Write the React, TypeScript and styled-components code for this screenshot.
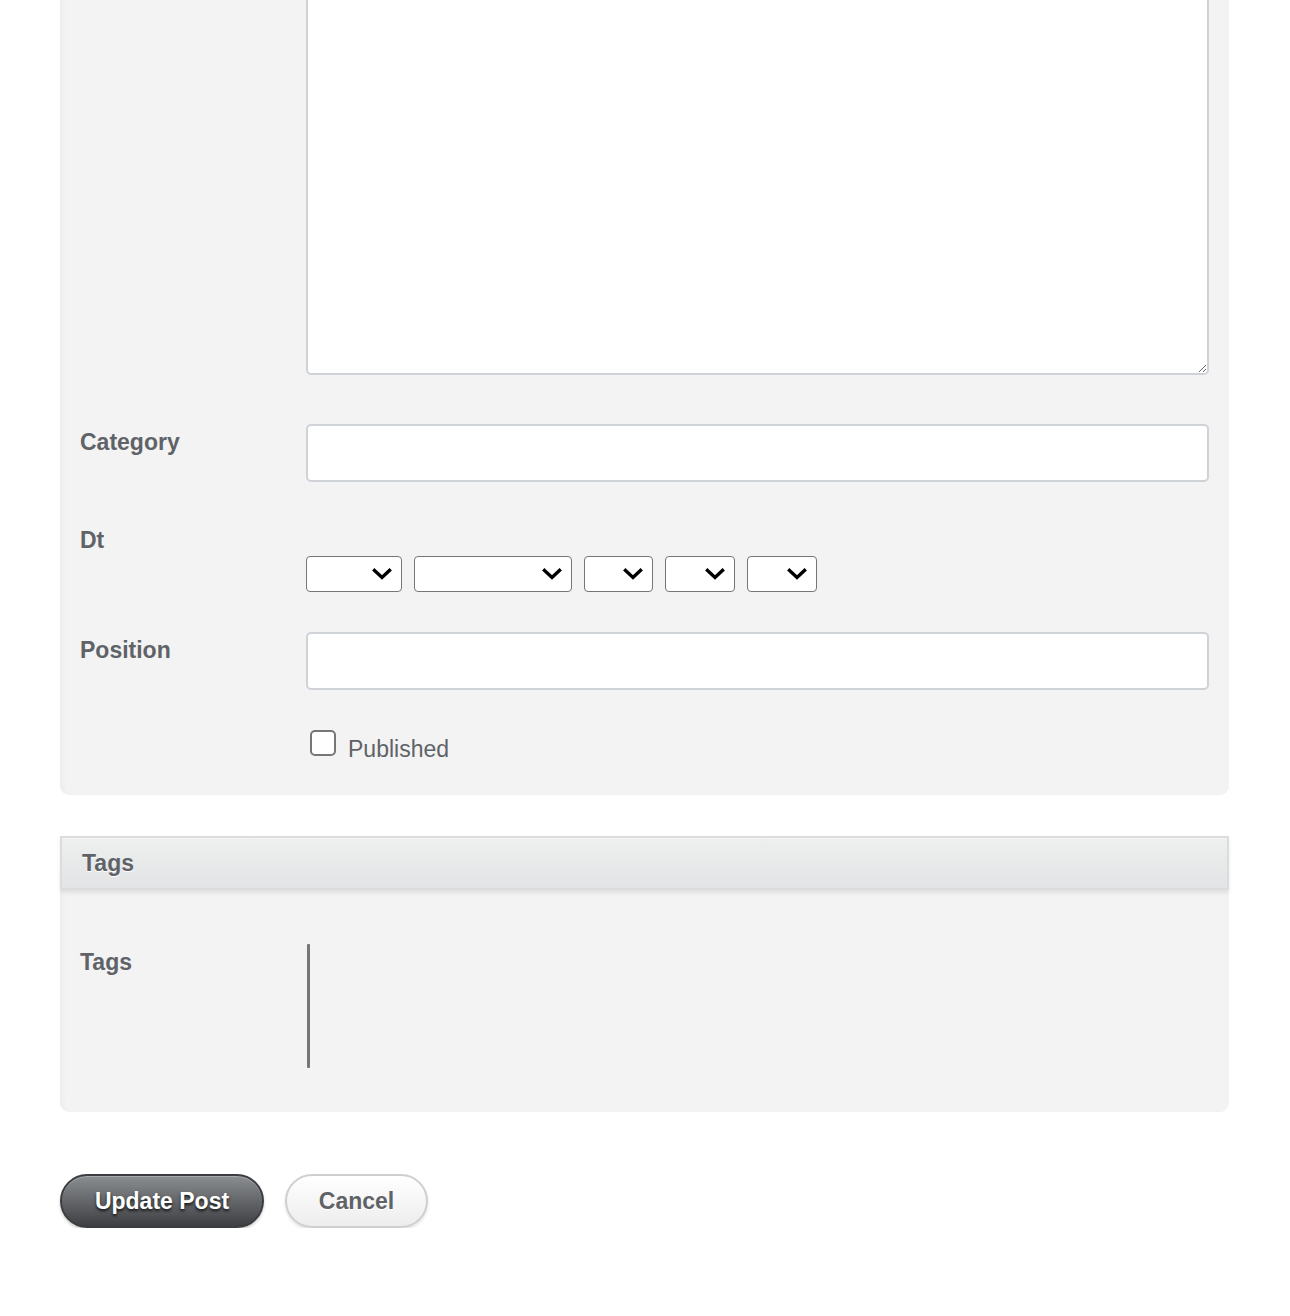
import React from "react";
import styled, { createGlobalStyle } from "styled-components";

const Global = createGlobalStyle`
  html, body { margin: 0; padding: 0; background: #ffffff; }
  body { font-family: "Liberation Sans", Arial, Helvetica, sans-serif; overflow: hidden; }
  * { box-sizing: border-box; }
`;

const Page = styled.div`
  width: 1290px;
  padding: 0 61px 0 60px;
  display: flex;
  flex-direction: column;
`;

const Panel = styled.section<{ $top?: boolean }>`
  background: #f3f3f3;
  border-radius: 0 0 9px 9px;
  box-shadow: inset 8px 0 8px -8px rgba(0, 0, 0, 0.05), 0 1px 1px rgba(0, 0, 0, 0.06);
  padding: ${(p) => (p.$top ? "0 20px 31px 20px" : "54px 20px 43px 20px")};
`;

const PanelHeader = styled.header`
  margin-top: 42px;
  height: 54px;
  display: flex;
  align-items: center;
  padding-left: 20px;
  background: linear-gradient(#eeefef, #e2e4e5);
  border: 2px solid #dcdcdc;
  box-shadow: inset 0 1px 0 #f6f6f6, 0 3px 4px rgba(0, 0, 0, 0.08);
  position: relative;
  z-index: 1;
  font-size: 23px;
  font-weight: 700;
  color: #5f6368;
  text-shadow: 0 1px 0 #ffffff;
`;

const Row = styled.div<{ $gap?: number }>`
  display: grid;
  grid-template-columns: 226px 1fr;
  margin-top: ${(p) => (p.$gap ?? 41)}px;
`;

const Label = styled.label`
  padding-top: 4px;
  font-size: 23px;
  line-height: 28px;
  font-weight: 700;
  color: #5f6368;
`;

const TextArea = styled.textarea`
  display: block;
  width: 903px;
  height: 405px;
  margin-top: -30px;
  border: 2px solid #cfd2d6;
  border-radius: 5px;
  background: #ffffff;
  resize: both;
  font-family: inherit;
  font-size: 23px;
`;

const TextInput = styled.input`
  display: block;
  width: 903px;
  height: 58px;
  border: 2px solid #cfd2d6;
  border-radius: 5px;
  background: #ffffff;
  font-family: inherit;
  font-size: 23px;
  padding: 0 12px;
`;

const SelectGroup = styled.div`
  display: flex;
  gap: 12px;
  margin-top: 34px;
`;

const SelectWrap = styled.div`
  position: relative;
  display: inline-block;
`;

const Select = styled.select<{ $w: number }>`
  appearance: none;
  -webkit-appearance: none;
  display: block;
  width: ${(p) => p.$w}px;
  height: 36px;
  border: 1.5px solid #767676;
  border-radius: 4px;
  background: #ffffff;
  font-family: inherit;
  font-size: 16px;
`;

const Chevron = styled.svg`
  position: absolute;
  right: 10px;
  top: 12px;
  width: 20px;
  height: 12px;
  pointer-events: none;
`;

const CheckRow = styled.label`
  grid-column: 2;
  display: flex;
  align-items: center;
  gap: 12px;
  padding-left: 4px;
  font-size: 23px;
  line-height: 28px;
  color: #5f6368;
`;

const CheckBox = styled.span`
  display: inline-block;
  width: 26px;
  height: 26px;
  border: 2px solid #767676;
  border-radius: 5px;
  background: #ffffff;
  margin-top: -6px;
`;

const CheckText = styled.span`
  padding-top: 6px;
`;

const TagsField = styled.div`
  width: 3px;
  height: 124px;
  margin-left: 1px;
  background: #767676;
  border-radius: 1px;
`;

const Actions = styled.div`
  display: flex;
  gap: 21px;
  margin-top: 63px;
`;

const Button = styled.button<{ $primary?: boolean }>`
  height: 54px;
  padding: 0;
  border-radius: 27px;
  font-family: inherit;
  font-size: 23px;
  font-weight: 700;
  cursor: pointer;
  ${(p) =>
    p.$primary
      ? `
    width: 204px;
    color: #ffffff;
    background: linear-gradient(#8b8e91, #3d3f42);
    border: 2px solid #3b3d40;
    text-shadow: 0 2px 3px rgba(0,0,0,0.8);
    box-shadow: inset 0 1px 0 rgba(255,255,255,0.25), 0 2px 3px rgba(0,0,0,0.2);
  `
      : `
    width: 143px;
    color: #5f6368;
    background: linear-gradient(#ffffff, #ededed);
    border: 2px solid #cfcfcf;
    text-shadow: 0 1px 0 #ffffff;
    box-shadow: 0 2px 3px rgba(0,0,0,0.12);
  `}
`;

const ChevronIcon = () => (
  <Chevron viewBox="0 0 20 12">
    <path d="M2.5 2.5 L10 9.5 L17.5 2.5" fill="none" stroke="#000" strokeWidth="3.4" strokeLinecap="square" />
  </Chevron>
);

const selects = [96, 158, 69, 70, 70];

export default function App() {
  return (
    <>
      <Global />
      <Page>
        <Panel $top>
          <Row $gap={0}>
            <span />
            <TextArea />
          </Row>
          <Row $gap={49}>
            <Label>Category</Label>
            <TextInput type="text" />
          </Row>
          <Row $gap={40}>
            <Label>Dt</Label>
            <SelectGroup>
              {selects.map((w, i) => (
                <SelectWrap key={i}>
                  <Select $w={w}>
                    <option value=""></option>
                  </Select>
                  <ChevronIcon />
                </SelectWrap>
              ))}
            </SelectGroup>
          </Row>
          <Row $gap={40}>
            <Label>Position</Label>
            <TextInput type="text" />
          </Row>
          <Row $gap={39}>
            <CheckRow>
              <CheckBox />
              <CheckText>Published</CheckText>
            </CheckRow>
          </Row>
        </Panel>
        <PanelHeader>Tags</PanelHeader>
        <Panel>
          <Row $gap={0}>
            <Label>Tags</Label>
            <TagsField />
          </Row>
        </Panel>
        <Actions>
          <Button $primary>Update Post</Button>
          <Button>Cancel</Button>
        </Actions>
      </Page>
    </>
  );
}
